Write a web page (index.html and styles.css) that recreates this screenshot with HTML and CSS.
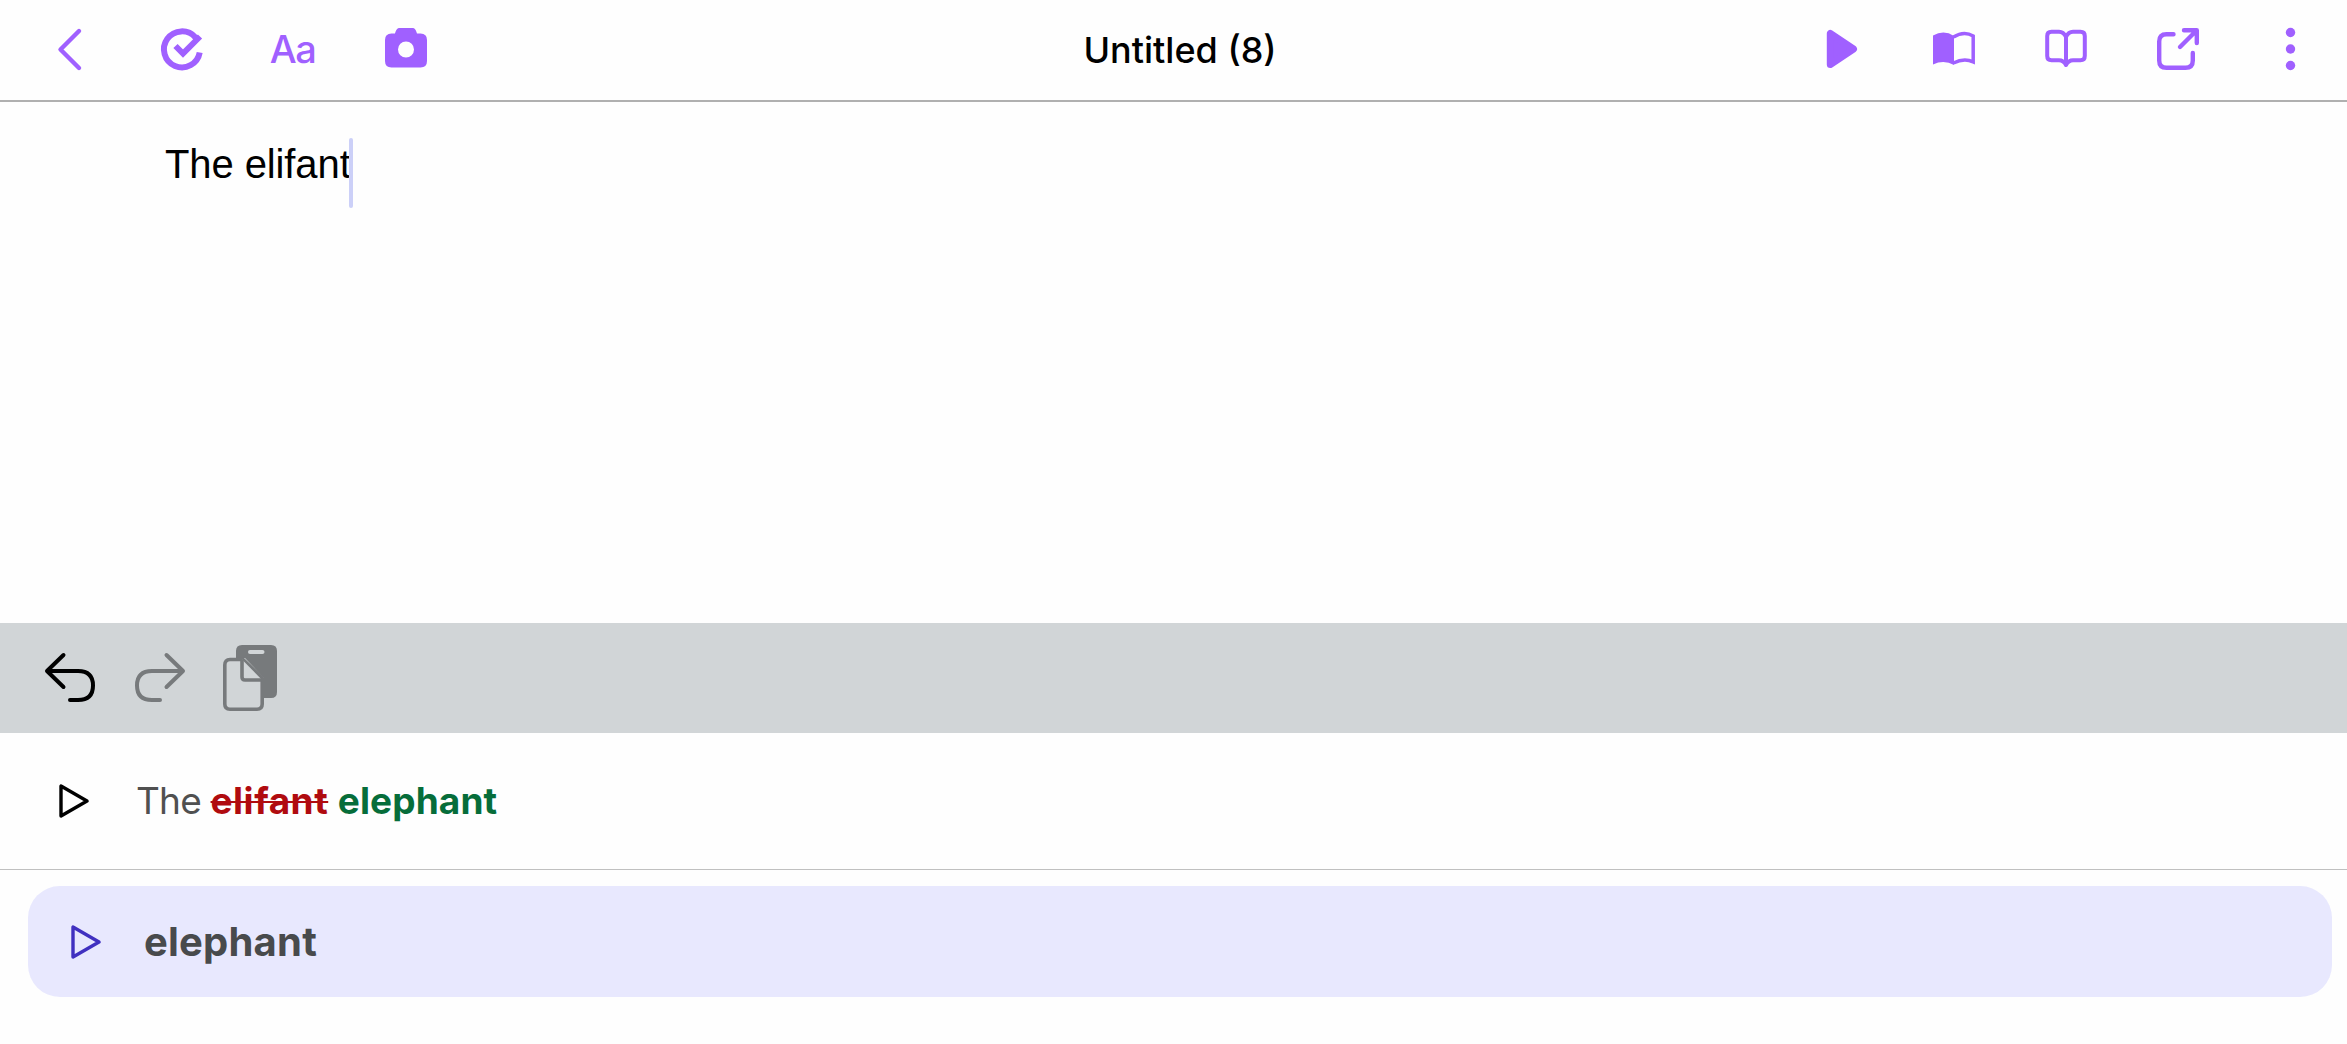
FILE: index.html
```
<!DOCTYPE html>
<html lang="en">
<head>
    <meta charset="UTF-8">
    <title>Untitled (8)</title>
    <link rel="stylesheet" href="styles.css">
</head>
<body>
    <header class="top-bar">
        <div class="icon-group">
            <svg class="icon" viewBox="0 0 48 48" fill="none" stroke="currentColor" stroke-width="4.4" stroke-linecap="round" stroke-linejoin="round">
                <path d="M33 6 14.500 24.500 33 43"/>
            </svg>
            <svg class="icon" viewBox="0 0 48 48" fill="none" stroke="currentColor" stroke-width="6">
                <path d="M37.500 12.500A18 18 0 1 0 41.700 27.500M42 11.500 25 28.500 17.500 21"/>
            </svg>
            <span class="icon text-icon">Aa</span>
            <svg class="icon" viewBox="0 0 48 48" fill="currentColor">
                <path fill-rule="evenodd" d="M18 3H30C33 3 34 5 35 8.500H38.500Q45 8.500 45 15V36Q45 42.500 38.500 42.500H9.500Q3 42.500 3 36V15Q3 8.500 9.500 8.500H13C14 5 15 3 18 3ZM24 16.500A8 8 0 1 0 24 32.500 8 8 0 1 0 24 16.500Z"/>
            </svg>
        </div>
        <h1 class="doc-title">Untitled (8)</h1>
        <div class="icon-group">
            <svg class="icon" viewBox="0 0 48 48" fill="currentColor" stroke="currentColor" stroke-width="7" stroke-linejoin="round">
                <path d="M12.300 8.500V39.500L35.500 24Z"/>
            </svg>
            <svg class="icon" viewBox="0 0 48 48" fill="none" stroke="currentColor" stroke-width="3.500">
                <path fill="currentColor" stroke="none" d="M3 10.500Q14 4.500 24 11V40Q14 34.500 3 39.500Z"/>
                <path d="M23.500 12Q34 5.500 43.200 11V36.800Q34 32.500 23.500 38"/>
            </svg>
            <svg class="icon" viewBox="0 0 48 48" fill="none" stroke="currentColor" stroke-width="4" stroke-linejoin="round">
                <path d="M24 12Q21.500 6.800 17 6.800H9.500Q5.200 6.800 5.200 11V31Q5.200 35.200 9.500 35.200H17Q21.500 35.200 24 40Q26.500 35.200 31 35.200H38.500Q42.800 35.200 42.800 31V11Q42.800 6.800 38.500 6.800H31Q26.500 6.800 24 12V40"/>
            </svg>
            <svg class="icon" viewBox="0 0 48 48" fill="none" stroke="currentColor" stroke-width="4.400" stroke-linecap="round" stroke-linejoin="round">
                <path d="M19.500 9.200H12.500Q5.200 9.200 5.200 16.500V35.500Q5.200 42.800 12.500 42.800H31.500Q38.800 42.800 38.800 35.500V28M30 5.200H42.800V18M42.500 5.500 26 22"/>
            </svg>
            <svg class="icon" viewBox="0 0 48 48" fill="currentColor">
                <circle cx="24.500" cy="7.500" r="4.700"/>
                <circle cx="24.500" cy="24" r="4.700"/>
                <circle cx="24.500" cy="40.500" r="4.700"/>
            </svg>
        </div>
    </header>
    <main class="editor">
        <span class="editor-text">The elifant</span>
        <span class="caret"></span>
    </main>
    <div class="edit-bar">
        <svg class="undo" viewBox="0 0 56 58" fill="none" stroke="currentColor" stroke-width="4" stroke-linecap="round" stroke-linejoin="round">
            <path d="M21.500 10 5 26 21.500 42M6 26H36Q51 26 51 40.500T36 55H28"/>
        </svg>
        <svg class="redo" viewBox="0 0 56 58" fill="none" stroke="currentColor" stroke-width="4" stroke-linecap="round" stroke-linejoin="round">
            <path d="M34.500 10 51 26 34.500 42M50 26H20Q5 26 5 40.500T20 55H28"/>
        </svg>
        <svg class="paste" viewBox="0 0 54 66">
            <path fill="currentColor" d="M13 13V6Q13 0 19 0H48Q54 0 54 6V47Q54 53 48 53H41V33L22 13Z"/>
            <path class="paste-page" d="M20 14.500H7Q1.800 14.500 1.800 20V59Q1.800 64.200 7 64.200H34Q39.200 64.200 39.200 59V33Z"/>
            <path class="paste-page" d="M19 14.500V32Q19 35 22 35H39"/>
            <path class="paste-clip" d="M27 7H39.500"/>
        </svg>
    </div>
    <section class="suggestion">
        <svg class="play" viewBox="0 0 30 34">
            <path d="M2 2V32L28 17Z"/>
        </svg>
        <p class="sentence">The <del>elifant</del> <ins>elephant</ins></p>
    </section>
    <section class="choices">
        <div class="choice">
            <svg class="play" viewBox="0 0 30 34">
                <path d="M2 2V32L28 17Z"/>
            </svg>
            <span class="choice-word">elephant</span>
        </div>
    </section>
</body>
</html>
```
FILE: styles.css
```
* {
    box-sizing: border-box;
}
body {
    margin: 0;
    background: #fefefe;
    font-family: "Liberation Sans", Arial, sans-serif;
    height: 1044px;
    display: flex;
    flex-direction: column;
    overflow: hidden;
}
.top-bar {
    height: 102px;
    border-bottom: 2px solid #b0b0b0;
    padding: 0 33px 2px 46px;
    display: grid;
    grid-template-columns: 1fr auto 1fr;
    align-items: center;
    color: #a060ff;
}
.icon-group {
    display: flex;
    align-items: center;
    gap: 64px;
}
.icon-group:last-child {
    justify-content: flex-end;
}
.icon {
    width: 48px;
    height: 48px;
    flex: none;
}
.text-icon {
    display: flex;
    align-items: center;
    justify-content: center;
    padding-right: 3px;
    font: 500 38px/48px Inter, sans-serif;
    letter-spacing: -1.5px;
}
.doc-title {
    margin: 0;
    padding-top: 2px;
    font: 500 36px/48px Inter, sans-serif;
    color: #000;
}
.editor {
    height: 521px;
    padding: 36px 165px;
    display: flex;
    align-items: flex-start;
}
.editor-text {
    font-size: 40px;
    line-height: 52px;
    letter-spacing: -0.1px;
}
.caret {
    width: 4px;
    height: 70px;
    margin-left: -2px;
    border-radius: 2px;
    background: #ccd0f8;
}
.edit-bar {
    height: 110px;
    background: #d1d5d7;
    display: flex;
    padding: 22px 42px;
    color: #777a7c;
}
.undo, .redo {
    width: 56px;
    height: 58px;
    margin-right: 34px;
}
.undo {
    color: #000;
}
.paste {
    width: 54px;
    height: 66px;
    margin-left: 1px;
}
.paste-page {
    fill: #d1d5d7;
    stroke: currentColor;
    stroke-width: 3.6;
    stroke-linejoin: round;
}
.paste-clip {
    stroke: #d1d5d7;
    stroke-width: 4;
    stroke-linecap: round;
}
.suggestion {
    height: 137px;
    border-bottom: 1px solid #c0c0c0;
    padding-left: 58px;
    display: flex;
    align-items: center;
    gap: 47px;
}
.play {
    width: 30px;
    height: 34px;
    fill: none;
    stroke: #000;
    stroke-width: 3.4;
    stroke-linejoin: round;
}
.suggestion .play {
    margin-left: 1px;
}
.sentence {
    margin: 0;
    font: 400 37px/48px Inter, sans-serif;
    letter-spacing: -0.8px;
    color: #505050;
}
.sentence del {
    color: #b00b0f;
    font-weight: 700;
    letter-spacing: 0.5px;
    text-decoration-thickness: 2px;
}
.sentence ins {
    color: #066d3a;
    font-weight: 700;
    letter-spacing: 0.1px;
    text-decoration: none;
}
.choices {
    padding: 16px 15px 0 28px;
}
.choice {
    height: 111px;
    border-radius: 32px;
    background: #e8e8fe;
    padding-left: 43px;
    display: flex;
    align-items: center;
    gap: 43px;
}
.choice .play {
    stroke: #4030c0;
}
.choice-word {
    font: 700 40px/48px Inter, sans-serif;
    letter-spacing: 0.2px;
    color: #484a4c;
}
```
